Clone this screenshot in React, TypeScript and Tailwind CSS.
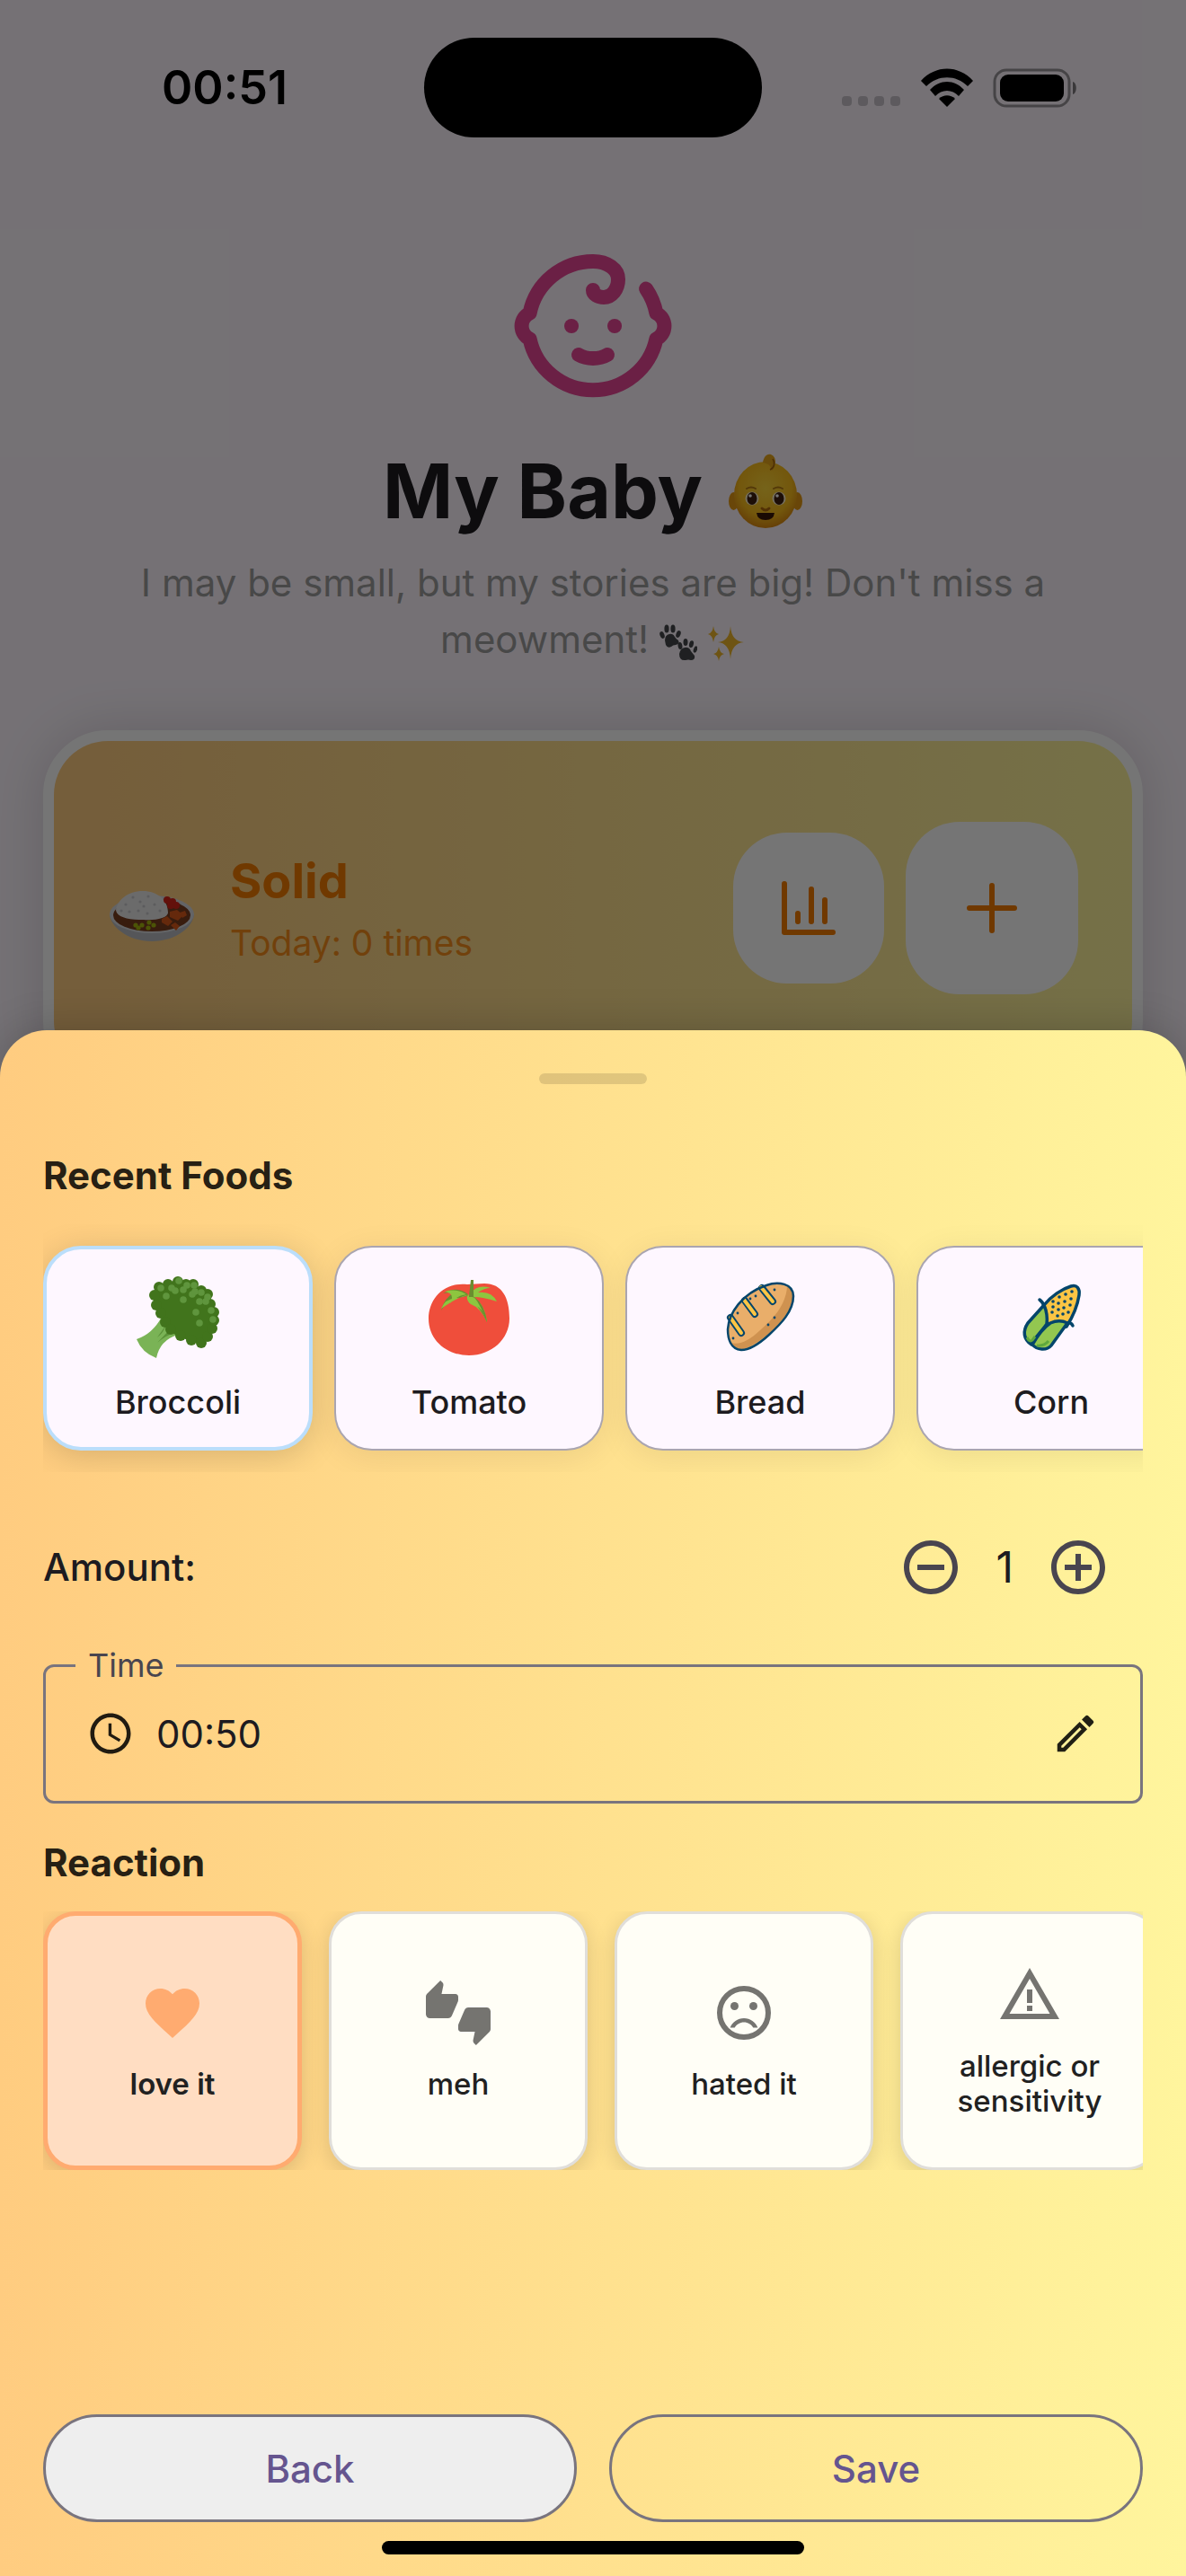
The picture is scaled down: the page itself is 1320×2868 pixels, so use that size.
import { useState, type ReactNode } from "react";
import { Baby } from "lucide-react";
import {
    MdAccessTime,
    MdAddCircleOutline,
    MdFavorite,
    MdOutlineEdit,
    MdRemoveCircleOutline,
    MdThumbsUpDown
} from "react-icons/md";

const dots = (points: number[][], r: number, fill: string) =>
    points.map(([cx, cy]) => <circle key={`${cx}-${cy}`} cx={cx} cy={cy} r={r} fill={fill} />);

/* ---------- Illustrations ---------- */

function BabyFace() {
    return (
        <svg viewBox="0 0 84 84" className="size-[84px]" role="img" aria-label="baby">
            <defs>
                <radialGradient id="skin" cx="0.5" cy="0.4" r="0.6">
                    <stop offset="0" stopColor="#ffd83a" />
                    <stop offset="0.7" stopColor="#fabd1c" />
                    <stop offset="1" stopColor="#dd8a10" />
                </radialGradient>
            </defs>
            <ellipse cx="6.500" cy="53" rx="5.500" ry="10" fill="#e59a14" />
            <ellipse cx="77.500" cy="53" rx="5.500" ry="10" fill="#e59a14" />
            <ellipse cx="42" cy="46" rx="35" ry="37" fill="url(#skin)" />
            <path d="M39 10C40 3 44 0 48 1c6 2 7 12 1 18-1-5-3-8-10-9z" fill="#e8a51c" />
            <path d="M47 18c5-2 6-8 3-12" fill="none" stroke="#a8660b" strokeWidth="1.500" />
            <path d="M21 39q5-3 10 0M51 39q5-3 10 0" fill="none" stroke="#b57b14" strokeWidth="2" strokeLinecap="round" />
            <ellipse cx="27" cy="50" rx="7.500" ry="7.500" fill="#fff3cf" />
            <ellipse cx="57" cy="50" rx="7.500" ry="7.500" fill="#fff3cf" />
            <ellipse cx="27" cy="50" rx="5.500" ry="7" fill="#3d1f10" />
            <ellipse cx="57" cy="50" rx="5.500" ry="7" fill="#3d1f10" />
            <circle cx="25" cy="47" r="1.800" fill="#fff" />
            <circle cx="55" cy="47" r="1.800" fill="#fff" />
            <path d="M38 61q4 4 8 0" fill="none" stroke="#b46c0c" strokeWidth="3" strokeLinecap="round" />
            <path d="M32 66h20q-1 8-10 8t-10-8z" fill="#3a1608" />
        </svg>
    );
}

function PawPrints() {
    return (
        <svg viewBox="0 0 42 42" className="inline-block size-[42px] align-middle" role="img" aria-label="paw prints">
            <g fill="#45474a">
                <path d="M6 18q0-6 5-7 4-1 6 3 1 2 4 4 2 4-3 5-3 0-5 2-4 2-6-2z" />
                <ellipse cx="3" cy="12" rx="2.500" ry="4" transform="rotate(-20 3 12)" />
                <ellipse cx="8" cy="5" rx="2.600" ry="4.500" />
                <ellipse cx="15" cy="5" rx="2.600" ry="4.500" />
                <ellipse cx="21" cy="11" rx="2.500" ry="4" transform="rotate(20 21 11)" />
                <path d="M22 33q1-6 6-7 5-1 7 4l4 5q1 5-4 5-3-1-6 0-7 1-7-7z" />
                <ellipse cx="23" cy="24" rx="2.400" ry="4" transform="rotate(-10 23 24)" />
                <ellipse cx="29" cy="20" rx="2.500" ry="4" />
                <ellipse cx="35.500" cy="22" rx="2.400" ry="4" transform="rotate(15 35 22)" />
                <ellipse cx="40" cy="28" rx="2" ry="3.800" transform="rotate(20 40 28)" />
            </g>
        </svg>
    );
}

function Sparkles() {
    return (
        <svg viewBox="0 0 42 42" className="ml-3 inline-block size-[42px] align-middle" role="img" aria-label="sparkles">
            <g fill="#f0b72c">
                <path d="M25 2q1 17 15 18-14 1-15 19-1-18-14-19 13-1 14-18z" />
                <path d="M6 2q1 8 6 9-5 1-6 9-1-8-6-9 5-1 6-9z" />
                <path d="M12 25q1 7 6 8-5 1-6 8-1-7-6-8 5-1 6-8z" />
            </g>
        </svg>
    );
}

function CurryBowl() {
    return (
        <svg viewBox="0 -27 96 96" className="size-24 shrink-0" role="img" aria-label="curry and rice">
            <path d="M2 27c0 14 20 31 47 31s47-17 47-31z" fill="#b9bcc2" />
            <ellipse cx="49" cy="28" rx="47" ry="21" fill="#d8dade" />
            <ellipse cx="49" cy="29" rx="43" ry="18" fill="#7a3d20" />
            <path d="M9 23C11 12 22 2 39 2c16 0 28 10 28 24 0 6-14 9-27 8C24 34 10 32 9 23z" fill="#e9e9ea" />
            {dots([[20, 17], [28, 9], [36, 14], [45, 8], [52, 17], [24, 25], [34, 24], [44, 27], [58, 24], [15, 24], [40, 19]], 1.6, "#c9c9cc")}
            {dots([[66, 12], [72, 14], [76, 18], [70, 18]], 4, "#d8241a")}
            <path d="M60 33l6-3 6 6-5 5-7-4zM69 25l8-2 7 6-6 6-9-4zM80 26l6-2 2 5-5 3zM70 40l5-3 5 4-4 5z" fill="#dc5a1b" />
            {dots([[31, 40], [38, 40], [46, 37], [51, 40], [34, 43], [45, 43]], 2.6, "#a5b80e")}
        </svg>
    );
}

function Broccoli() {
    return (
        <svg viewBox="0 0 96 96" className="size-24" aria-hidden="true">
            <path d="M30 47Q20 66 2 72q6 15 22 21 4-20 24-26z" fill="#7ab356" />
            <path d="M35 56q-3 9-10 14M46 64q-12 4-21 12l18-19z" fill="#5a9138" />
            <path d="M47 6L27 13l-7 12 3 12 6 10 10 17 24 11 11 2 9-12 6-13V42l-6-20-8-6-12-6z" fill="#41741c" />
            {dots([[48, 8], [57, 11], [37, 11], [27, 14], [22, 23], [24, 34], [29, 43], [34, 53], [40, 61], [51, 68], [63, 73], [74, 76], [81, 69], [86, 60], [88, 51], [88, 42], [84, 33], [81, 22], [74, 18], [65, 11]], 6, "#41741c")}
            {dots([[29, 15], [35, 24], [49, 7], [41, 15], [45, 18], [58, 12], [54, 17], [66, 12], [64, 22], [67, 19], [74, 20], [81, 25], [79, 30], [72, 30], [54, 28], [68, 42], [85, 40], [87, 50], [72, 54]], 3.8, "#5f953d")}
        </svg>
    );
}

function Tomato() {
    return (
        <svg viewBox="0 0 96 96" className="size-24" aria-hidden="true">
            <path d="M46 11C20 8 3 27 3 49c0 24 20 41 45 41s45-18 45-41c0-23-8-39-28-39-7 0-12 1-19 1z" fill="#ef4e3b" />
            <path d="M47 22q-13-10-28-1 7-1 14-2-13 7-16 21 7-13 29-16z" fill="#6a8e2f" />
            <path d="M21 19q13-4 24 3-12 2-18 10 6-11-6-13zM17 38q4-11 17-12 9-1 14-4-13 3-31 16zM49 22q8-12 23-7-7 0-14 5 15-2 21 10-16-5-25-5 10 10 14 28-7-16-18-20-5-4-4-9z" fill="#8dc63f" />
            <path d="M48 24l2-18h3v19q12 8 15 28-7-16-20-27z" fill="#6a8e2f" />
            <path d="M47 25q2 8 9 10 7 2 12 18-3-22-16-28z" fill="#8dc63f" />
            <path d="M53 24q13 10 15 29-7-19-15-29z" fill="#6a8e2f" />
        </svg>
    );
}

function Bread() {
    const loaf = "M55 12C68 7 85 10 85 24c0 17-14 31-27 43C46 78 36 84 27 84 15 83 12 71 12 61c1-18 16-40 43-49z";
    return (
        <svg viewBox="0 0 96 96" className="size-24" aria-hidden="true">
            <path d={loaf} fill="#e9ae6a" />
            <path d="M78 13c-1 21-16 37-30 49-12 11-22 17-33 14 4 7 12 9 20 5 24-13 48-34 50-57 0-5-2-9-7-11z" fill="#cf9250" />
            <path d="M50 15l12 15M31 29l11 15M15 48l12 17" stroke="#04456b" strokeWidth="8" strokeLinecap="round" />
            <path d="M49 14l13 16M30 28l12 16M15 48l12 17" stroke="#fcc544" strokeWidth="4" strokeLinecap="round" />
            <path d={loaf} fill="none" stroke="#04456b" strokeWidth="2.500" />
            {dots([[64, 17], [43, 24], [37, 27], [23, 43], [64, 48], [57, 56], [18, 71]], 1.4, "#04456b")}
        </svg>
    );
}

function Corn() {
    return (
        <svg viewBox="0 0 96 96" className="size-24" aria-hidden="true">
            <g stroke="#04456b" strokeWidth="3.500" strokeLinejoin="round" strokeLinecap="round">
                <path d="M40 34C48 24 60 16 70 13c7-2 10 3 9 10-2 13-7 24-14 35l-20 4z" fill="#fcc544" />
                <path d="M40 34L22 54c-6 9-5 18 4 24 5-10 12-15 17-23 1-8 0-14-3-21z" fill="#93c750" />
                <path d="M27 78c7-12 14-20 20-24 7-3 13-3 19 0L48 79c-5 6-16 5-21-1z" fill="#93c750" />
                <path d="M40 35q-1-4-5-7M66 54q4-1 6 3" fill="none" />
            </g>
            <path d="M21 70q3 6 6 3l3-4M32 79q8 1 13-5" fill="none" stroke="#5fa83d" strokeWidth="3" />
            {dots([[71, 19], [64, 22], [57, 25], [50, 30], [70, 27], [63, 30], [56, 32], [50, 36], [69, 34], [62, 37], [56, 39], [49, 42], [67, 42], [61, 44], [55, 46]], 1.8, "#04456b")}
        </svg>
    );
}

/* ---------- Small icons ---------- */

function SignalIcons() {
    return (
        <svg viewBox="0 0 262 44" className="h-11 w-[262px]" role="img" aria-label="No signal, Wi-Fi, battery full">
            {[0, 18, 36, 54].map((x) => (
                <rect key={x} x={x} y="31" width="11" height="11" rx="4" fill="#000" opacity="0.2" />
            ))}
            <path d="M88 14C104-4 130-4 146 14l-6 6c-13-13-33-13-46 0z" />
            <path d="M98 24c11-12 27-12 38 0l-6 7c-7-8-19-8-26 0z" />
            <path d="M117 43l-9-9c5-5 13-5 18 0z" />
            <rect x="170" y="2" width="83" height="40" rx="13" fill="none" stroke="#000" strokeWidth="3" opacity="0.4" />
            <rect x="176" y="7" width="71" height="30" rx="9" />
            <path d="M257 15c5 1 5 13 0 14z" opacity="0.5" />
        </svg>
    );
}

function ChartIcon() {
    return (
        <svg viewBox="0 0 60 60" className="size-[60px]" aria-hidden="true">
            <path d="M3 3v54h54M18 36v9M33 9v36M48 21v24" fill="none" stroke="#f57c00" strokeWidth="6" strokeLinecap="round" strokeLinejoin="round" />
        </svg>
    );
}

function PlusIcon() {
    return (
        <svg viewBox="0 0 60 60" className="size-[60px]" aria-hidden="true">
            <path d="M30 5v50M5 30h50" stroke="#f57c00" strokeWidth="6" strokeLinecap="round" />
        </svg>
    );
}

function SadFaceIcon() {
    return (
        <svg viewBox="0 0 24 24" className="size-[72px]" fill="currentColor" aria-hidden="true">
            <circle cx="12" cy="12" r="9" fill="none" stroke="currentColor" strokeWidth="2" />
            <circle cx="8.500" cy="9.500" r="1.500" />
            <circle cx="15.500" cy="9.500" r="1.500" />
            <path d="M12 14c-2.330 0-4.320 1.450-5.120 3.500h1.670c.69-1.190 1.970-2 3.450-2s2.750.81 3.450 2h1.670c-.8-2.050-2.790-3.500-5.120-3.500z" />
        </svg>
    );
}

function WarningIcon() {
    return (
        <svg viewBox="0 0 24 24" className="size-[72px]" fill="currentColor" aria-hidden="true">
            <path d="M12 6l7.500 13h-15L12 6m0-4L1 21h22L12 2zm1 14h-2v2h2v-2zm0-6h-2v5h2v-5z" />
        </svg>
    );
}

/* ---------- Data ---------- */

const FOODS: { name: string; icon: ReactNode }[] = [
    { name: "Broccoli", icon: <Broccoli /> },
    { name: "Tomato", icon: <Tomato /> },
    { name: "Bread", icon: <Bread /> },
    { name: "Corn", icon: <Corn /> }
];

const REACTIONS: { name: string; icon: ReactNode }[] = [
    { name: "love it", icon: <MdFavorite size={72} /> },
    { name: "meh", icon: <MdThumbsUpDown size={72} /> },
    { name: "hated it", icon: <SadFaceIcon /> },
    { name: "allergic or sensitivity", icon: <WarningIcon /> }
];

/* ---------- Screens ---------- */

function HomeScreen() {
    return (
        <main className="flex flex-col items-center px-12 text-[#1d1b20]">
            <Baby size={192} strokeWidth={2} color="#e94696" className="mt-[114px]" />
            <h1 className="mt-[38px] flex items-center gap-7 text-[84px] leading-[100px] font-bold">
                My Baby <BabyFace />
            </h1>
            <p className="mt-5 px-[72px] text-center text-[42px] leading-[63px] text-[#9e9e9e]">
                I may be small, but my stories are big! Don't miss a meowment! <PawPrints />
                <Sparkles />
            </p>
            <section className="mt-[70px] w-full rounded-[72px] border-12 border-white bg-white shadow-[0_0_60px_rgba(0,0,0,0.15)]">
                <div className="flex items-center rounded-[60px] bg-linear-to-r from-[#ffcc80] to-[#fff59d] px-[60px] py-[90px] text-[#f57c00]">
                    <CurryBowl />
                    <div className="ml-10 flex flex-1 flex-col gap-1.5">
                        <h2 className="text-[54px] leading-[72px] font-bold">Solid</h2>
                        <p className="text-[39px] leading-[54px] opacity-80">Today: 0 times</p>
                    </div>
                    <div className="flex items-center gap-6">
                        <button type="button" aria-label="Statistics" className="flex size-[168px] items-center justify-center rounded-[60px] bg-white">
                            <ChartIcon />
                        </button>
                        <button type="button" aria-label="Add solid food" className="flex size-[192px] items-center justify-center rounded-[60px] bg-white">
                            <PlusIcon />
                        </button>
                    </div>
                </div>
            </section>
        </main>
    );
}

function FoodSheet() {
    const [food, setFood] = useState("Broccoli");
    const [amount, setAmount] = useState(1);
    const [time, setTime] = useState("00:50");
    const [reaction, setReaction] = useState("love it");

    return (
        <div
            role="dialog"
            aria-label="Add solid food"
            className="absolute inset-x-0 bottom-0 flex h-3/5 flex-col rounded-t-[52px] bg-linear-to-r from-[#ffcc80] to-[#fff59d] px-12 pt-12 pb-[60px] shadow-[0_0_48px_rgba(0,0,0,0.2)]"
        >
            <div className="h-3 w-[120px] shrink-0 self-center rounded-full bg-black/12" />

            <h2 className="mt-[72px] text-[42px] leading-[60px] font-bold text-black/87">Recent Foods</h2>
            <div className="mt-6 flex shrink-0 gap-6 overflow-hidden py-6">
                {FOODS.map(({ name, icon }) => (
                    <button
                        key={name}
                        type="button"
                        aria-pressed={food === name}
                        onClick={() => setFood(name)}
                        className={`flex h-[228px] w-[300px] shrink-0 flex-col items-center justify-center gap-5 rounded-[42px] bg-[#fef7ff] pt-1 text-[#1d1b20] ${
                            food === name
                                ? "border-4 border-[#bbdefb] shadow-[0_6px_36px_rgba(0,0,0,0.16)]"
                                : "border-2 border-[#aaa5b0] shadow-[0_6px_36px_rgba(0,0,0,0.08)]"
                        }`}
                    >
                        {icon}
                        <span className="text-[36px] leading-[52px] font-medium">{name}</span>
                    </button>
                ))}
            </div>

            <div className="mt-[34px] flex items-center">
                <span className="flex-1 text-[42px] leading-[60px] font-medium text-[#1d1b20]">Amount:</span>
                <button type="button" aria-label="Decrease amount" onClick={() => setAmount(Math.max(0, amount - 1))} className="p-9 text-[#49454f]">
                    <MdRemoveCircleOutline size={72} />
                </button>
                <output className="text-[48px] leading-[60px] text-[#1d1b20]">{amount}</output>
                <button type="button" aria-label="Increase amount" onClick={() => setAmount(amount + 1)} className="p-9 text-[#49454f]">
                    <MdAddCircleOutline size={72} />
                </button>
            </div>

            <fieldset className="mt-4 rounded-xl border-3 border-[#79747e] px-[33px] pb-12">
                <legend className="px-3.5 text-[36px] leading-[42px] text-[#49454f]">
                    <label htmlFor="time">Time</label>
                </legend>
                <div className="mt-7 flex items-center gap-6 px-3 text-black/87">
                    <MdAccessTime size={54} />
                    <input
                        id="time"
                        type="text"
                        value={time}
                        onChange={(e) => setTime(e.target.value)}
                        className="h-[54px] min-w-0 flex-1 bg-transparent text-[42px] text-[#1d1b20] outline-none"
                    />
                    <button type="button" aria-label="Edit time">
                        <MdOutlineEdit size={54} />
                    </button>
                </div>
            </fieldset>

            <h2 className="mt-9 text-[42px] leading-[60px] font-bold text-black/87">Reaction</h2>
            <div className="mt-6 flex shrink-0 gap-[30px] overflow-hidden">
                {REACTIONS.map(({ name, icon }) => (
                    <button
                        key={name}
                        type="button"
                        aria-pressed={reaction === name}
                        onClick={() => setReaction(name)}
                        className={`flex size-72 shrink-0 flex-col items-center justify-center gap-6 rounded-[36px] px-6 shadow-[0_6px_24px_rgba(0,0,0,0.14)] ${
                            reaction === name
                                ? "border-5 border-[#ffab70] bg-[#ffddc2] font-semibold text-[#ffab70]"
                                : "border-3 border-[#e0deda] bg-[#fffef6] font-medium text-[#757470]"
                        }`}
                    >
                        {icon}
                        <span className="text-[33px] leading-[39px] text-[#212121]">{name}</span>
                    </button>
                ))}
            </div>

            <div className="mt-auto flex gap-9 text-[42px] font-medium text-[#65558f]">
                <button type="button" className="h-[120px] flex-1 rounded-full border-3 border-[#79747e] bg-[#eeeeee]">
                    Back
                </button>
                <button type="button" className="h-[120px] flex-1 rounded-full border-3 border-[#79747e]">
                    Save
                </button>
            </div>
        </div>
    );
}

export default function App() {
    return (
        <div className="relative min-h-screen overflow-hidden bg-[#fef7ff] font-['Inter',sans-serif]">
            <header className="grid grid-cols-[1fr_auto_1fr] items-center pt-[42px]">
                <time className="pl-7 text-center text-[52px] leading-[60px] font-semibold">00:51</time>
                <div className="h-[111px] w-[376px] rounded-full bg-black" />
                <div className="flex justify-center pr-8">
                    <SignalIcons />
                </div>
            </header>
            <HomeScreen />
            <div className="absolute inset-0 bg-black/54" />
            <FoodSheet />
            <div className="absolute bottom-6 left-1/2 h-[15px] w-[470px] -translate-x-1/2 rounded-full bg-black" />
        </div>
    );
}
